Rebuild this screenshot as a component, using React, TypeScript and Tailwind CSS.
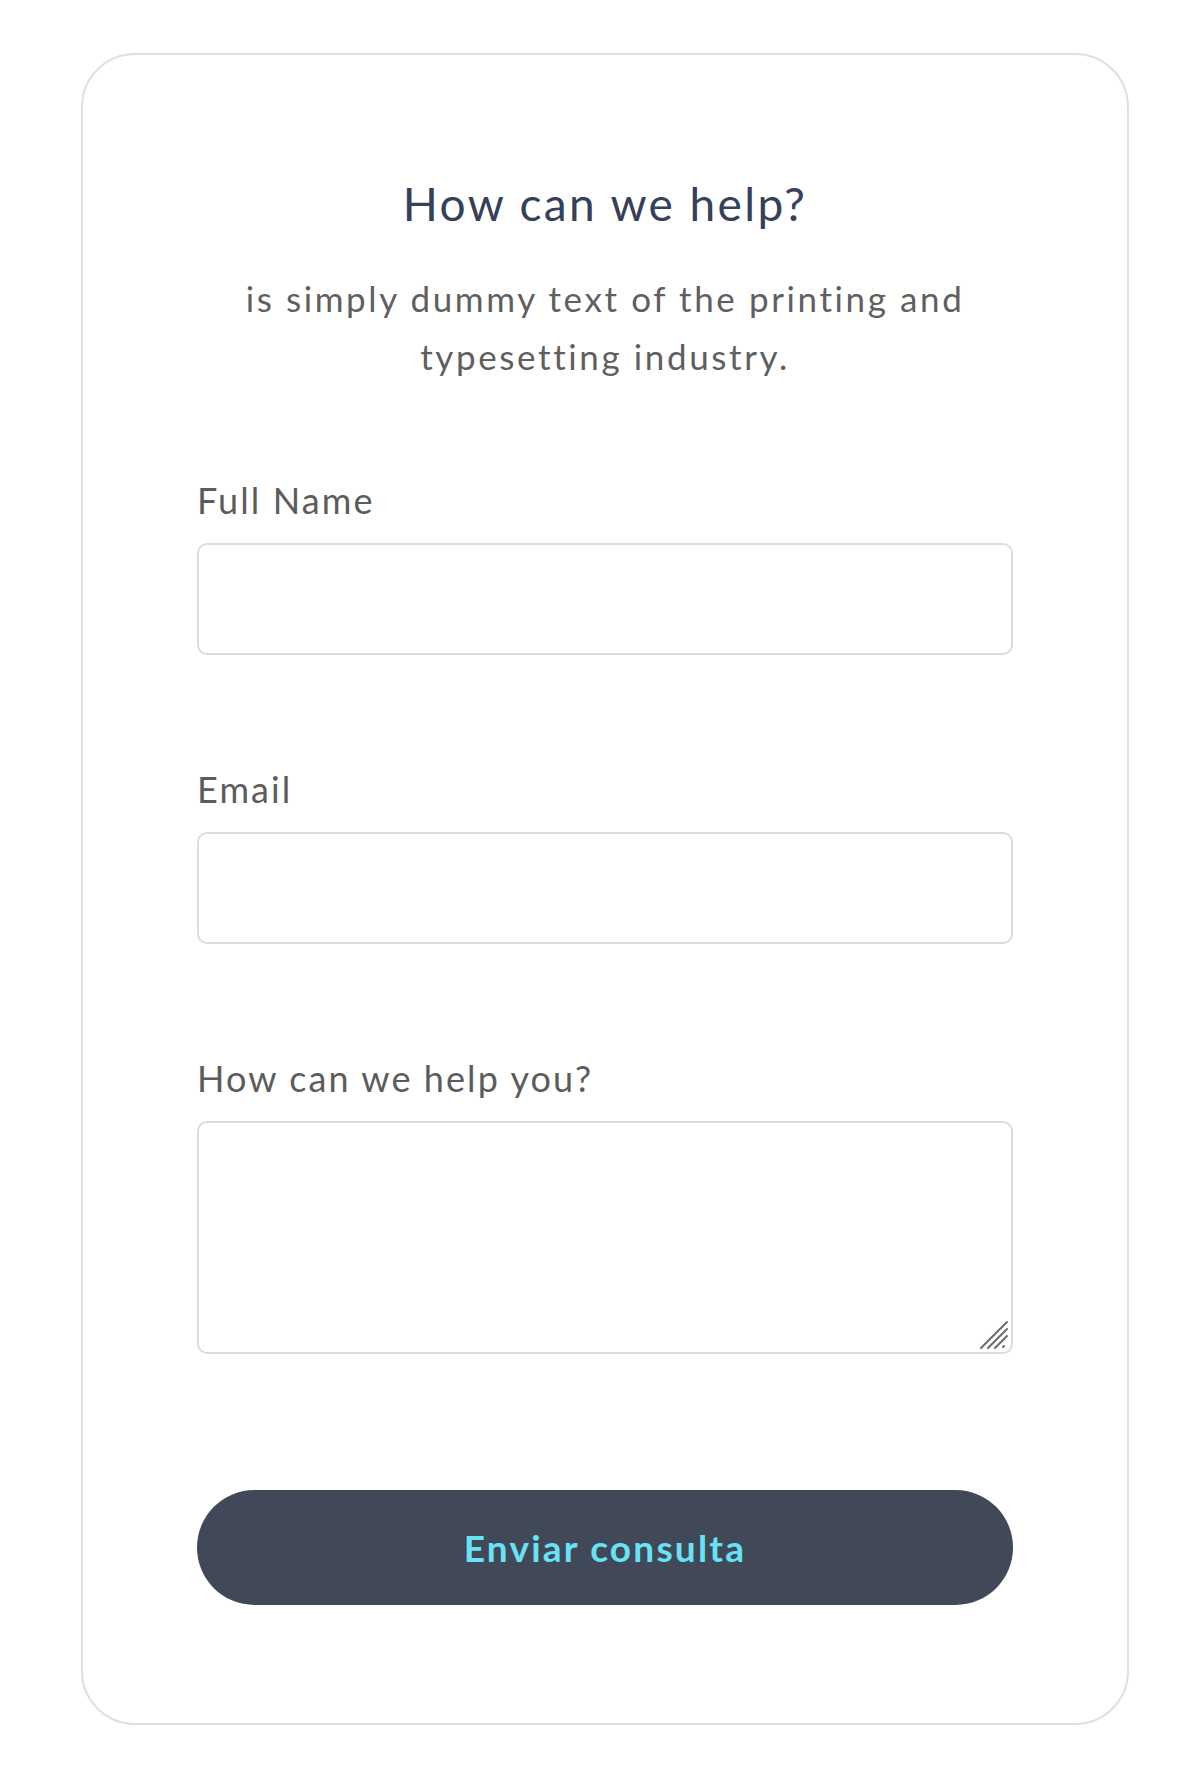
import React from "react";

const font = { fontFamily: "Lato, 'Noto Sans', sans-serif" };

function Field({ label, children }: { label: string; children: React.ReactNode }) {
  return (
    <div className="flex flex-col">
      <label className="text-[36px] leading-[44px] tracking-[2.1px] text-[#5c5c5c] mb-[21px]">{label}</label>
      {children}
    </div>
  );
}

export default function App() {
  return (
    <div className="min-h-[1772px] bg-white pt-[53px] pl-[81px]" style={font}>
      <div className="w-[1048px] rounded-[54px] border-2 border-[#dddfe3] bg-white px-[114px] pt-[121px] pb-[118px]">
        <h1 className="text-center text-[46px] leading-[56px] tracking-[2.4px] font-normal text-[#35405a]">How can we help?</h1>
        <p className="mt-[37px] text-center text-[35px] leading-[58px] tracking-[2.6px] text-[#5f5f5f] px-[20px]">
          is simply dummy text of the printing and typesetting industry.
        </p>
        <div className="mt-[93px] flex flex-col gap-[112px]">
          <Field label="Full Name">
            <input type="text" className="h-[112px] w-full rounded-[10px] border-2 border-[#dadce1] bg-white outline-none" />
          </Field>
          <Field label="Email">
            <input type="email" className="h-[112px] w-full rounded-[10px] border-2 border-[#dadce1] bg-white outline-none" />
          </Field>
          <Field label="How can we help you?">
            <div className="relative">
              <textarea className="block h-[233px] w-full resize-none rounded-[10px] border-2 border-[#dadce1] bg-white outline-none" />
              <svg
                className="pointer-events-none absolute bottom-[4px] right-[4px]"
                width="30"
                height="30"
                viewBox="0 0 30 30"
                fill="none"
                stroke="#6a6a6a"
                strokeWidth="2"
                strokeLinecap="round"
              >
                <line x1="2" y1="28" x2="28" y2="2" />
                <line x1="9" y1="28" x2="28" y2="9" />
                <line x1="16" y1="28" x2="28" y2="16" />
                <line x1="24" y1="27" x2="25" y2="26" />
              </svg>
            </div>
          </Field>
        </div>
        <button
          type="button"
          className="mt-[136px] flex h-[115px] w-full items-center justify-center rounded-full bg-[#414858] text-[37px] tracking-[2.2px] font-bold text-[#68e2f5]"
          style={font}
        >
          Enviar consulta
        </button>
      </div>
    </div>
  );
}
